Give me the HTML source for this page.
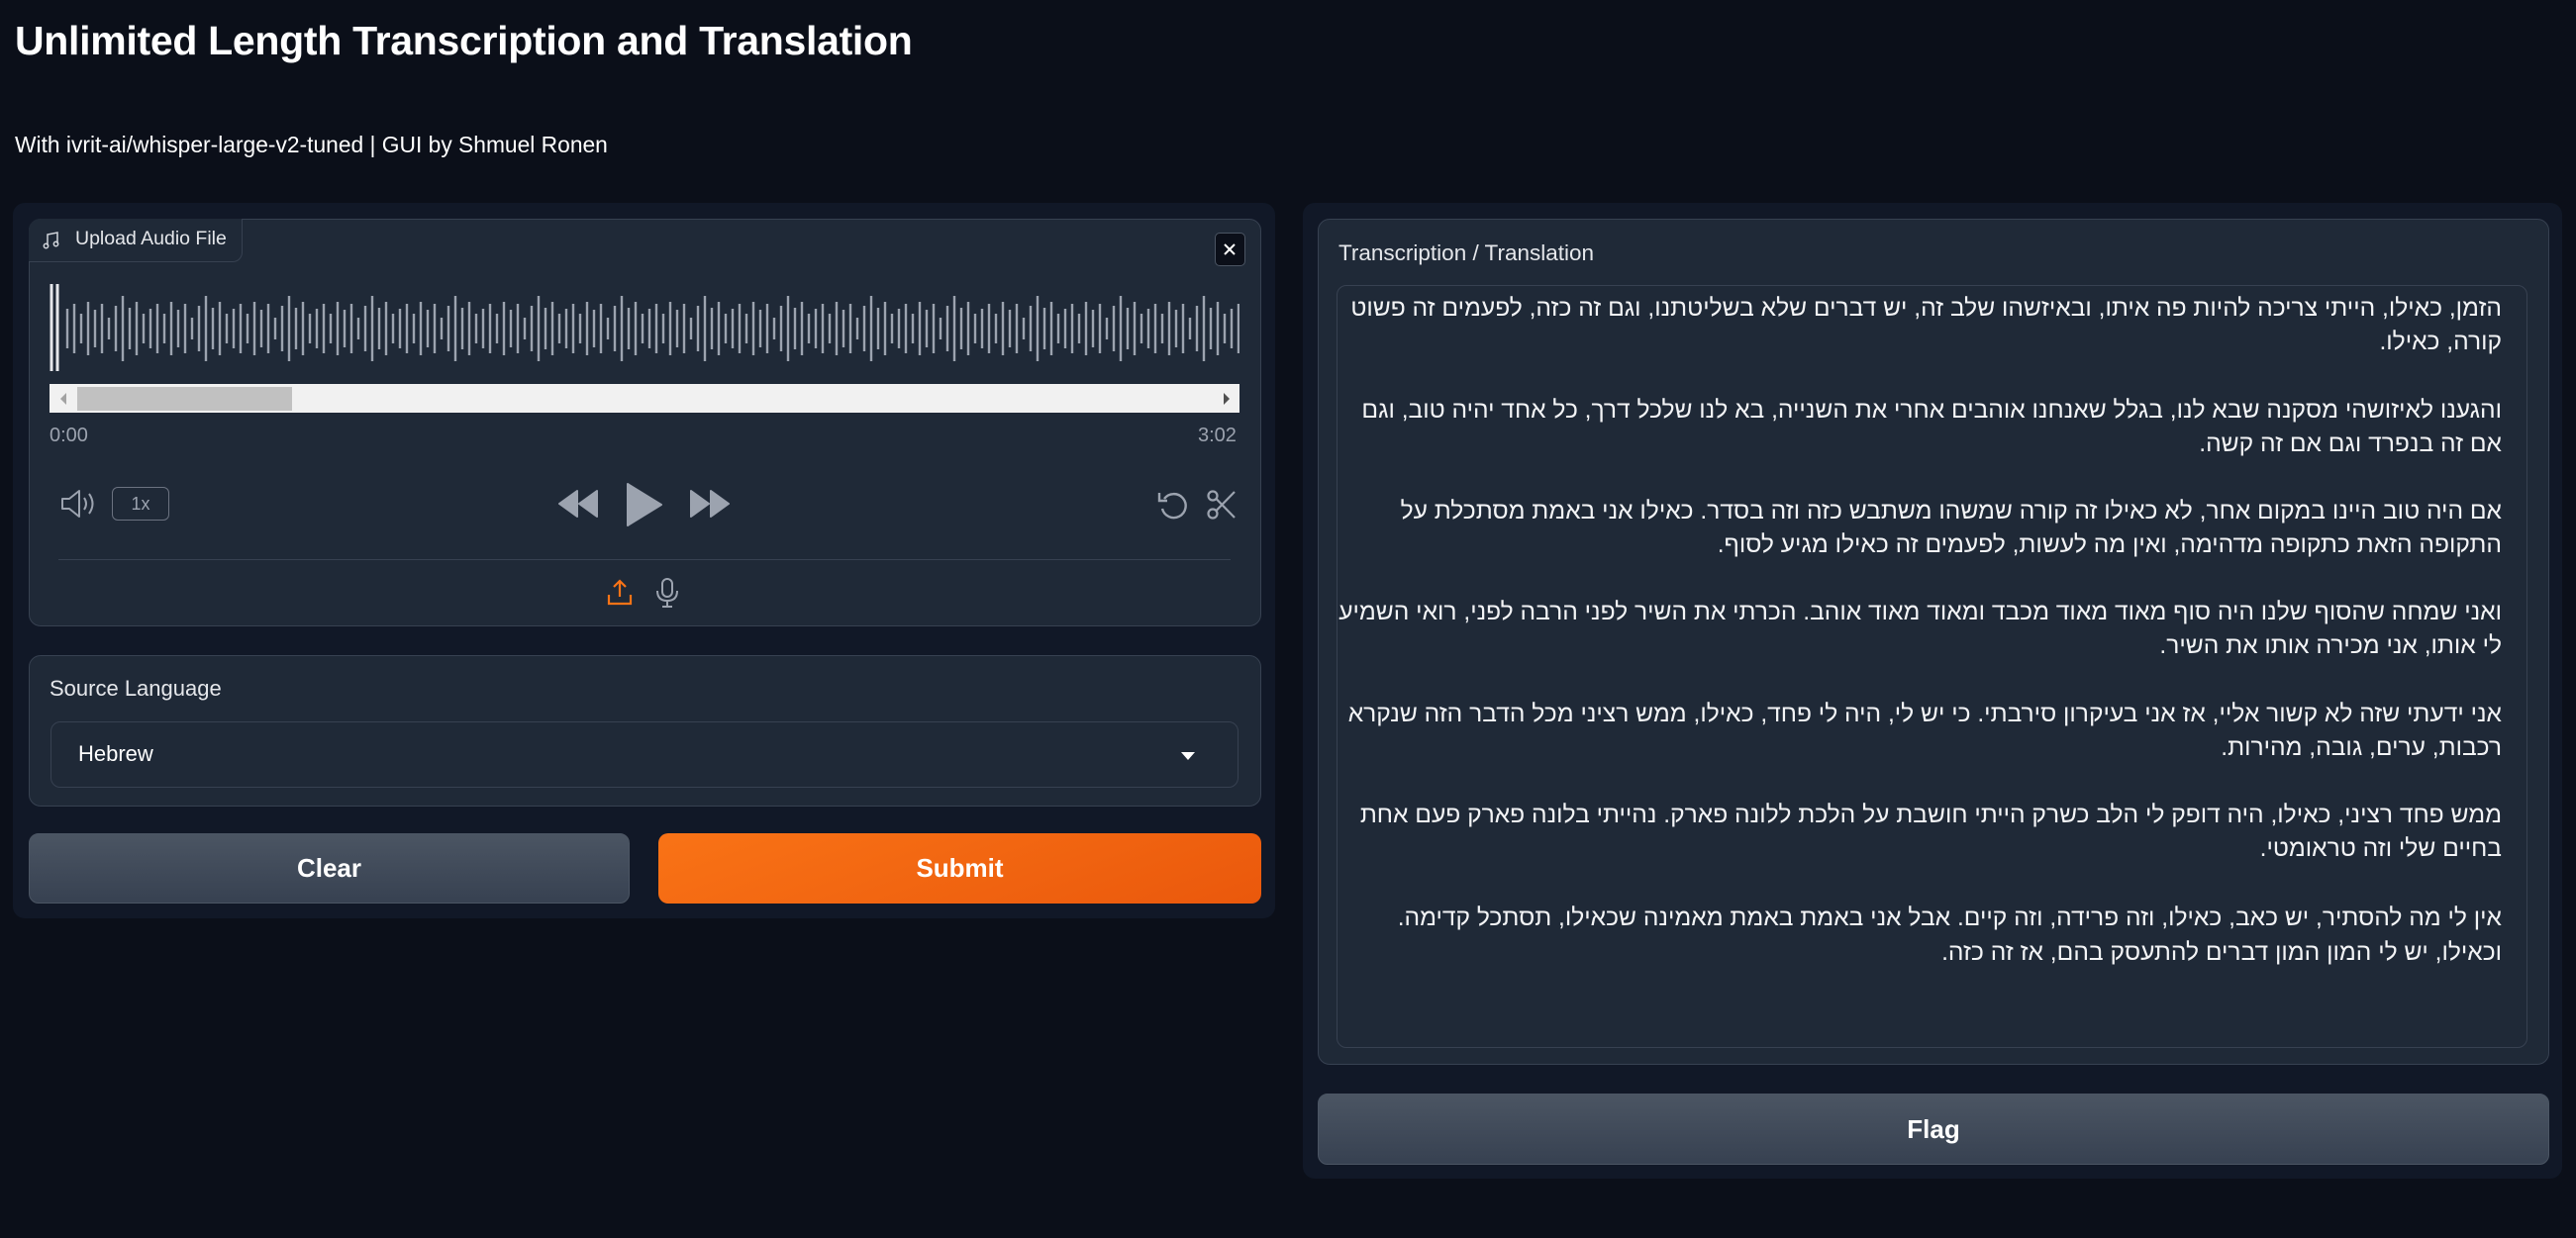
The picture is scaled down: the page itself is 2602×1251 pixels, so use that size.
<!DOCTYPE html>
<html><head><meta charset="utf-8"><style>
*{box-sizing:border-box;margin:0;padding:0}
body{width:2602px;height:1251px;background:#0b0f19;font-family:"Liberation Sans","DejaVu Sans",sans-serif;color:#fff;position:relative;overflow:hidden}
.a{position:absolute}
.panel{background:#111827;border-radius:12px}
.blk{background:#1f2937;border:1px solid #374151;border-radius:12px}
.btn{border-radius:10px;display:flex;align-items:center;justify-content:center;font-weight:bold;font-size:26px}
.gray{background:linear-gradient(180deg,#4b5563,#374151);border:1px solid #4b5563}
.hl{position:absolute;right:0;white-space:nowrap;direction:rtl;font-size:24.6px;color:#f3f4f6;line-height:34px}
</style></head><body>
<div class="a" style="left:15px;top:18px;font-size:41px;font-weight:bold;letter-spacing:-0.3px">Unlimited Length Transcription and Translation</div>
<div class="a" style="left:15px;top:133px;font-size:22.8px">With ivrit-ai/whisper-large-v2-tuned | GUI by Shmuel Ronen</div>

<div class="a panel" style="left:13px;top:205px;width:1275px;height:723px"></div>
<div class="a blk" style="left:29px;top:221px;width:1245px;height:412px"></div>
<div class="a" style="left:29px;top:221px;width:216px;height:44px;border-right:1px solid #374151;border-bottom:1px solid #374151;border-radius:12px 0 10px 0;background:#1f2937"></div>
<svg class="a" style="left:43px;top:233px" width="18" height="20" viewBox="0 0 18 20"><path d="M5 15V4l10-2v11" fill="none" stroke="#d1d5db" stroke-width="1.5"/><circle cx="3.5" cy="15.5" r="2.2" fill="none" stroke="#d1d5db" stroke-width="1.5"/><circle cx="13.5" cy="13.5" r="2.2" fill="none" stroke="#d1d5db" stroke-width="1.5"/></svg>
<div class="a" style="left:76px;top:230px;font-size:19.5px;color:#e5e7eb">Upload Audio File</div>
<div class="a" style="left:1227px;top:235px;width:31px;height:34px;background:#0b0f19;border:1px solid #4b5563;border-radius:5px"></div>
<svg class="a" style="left:1235px;top:245px" width="14" height="14"><path d="M2 2L12 12M12 2L2 12" stroke="#fff" stroke-width="2"/></svg>

<svg class="a" style="left:50px;top:287px" width="1202" height="90">
<defs><pattern id="w" x="16" y="0" width="84" height="90" patternUnits="userSpaceOnUse">
<g stroke="#9ca3af" stroke-width="2.4">
<line x1="2" y1="25" x2="2" y2="65"/><line x1="9" y1="20" x2="9" y2="70"/><line x1="16" y1="30" x2="16" y2="60"/><line x1="23" y1="18" x2="23" y2="72"/><line x1="30" y1="26" x2="30" y2="64"/><line x1="37" y1="20" x2="37" y2="70"/><line x1="44" y1="34" x2="44" y2="56"/><line x1="51" y1="22" x2="51" y2="68"/><line x1="58" y1="12" x2="58" y2="78"/><line x1="65" y1="24" x2="65" y2="66"/><line x1="72" y1="18" x2="72" y2="72"/><line x1="79" y1="30" x2="79" y2="60"/>
</g></pattern></defs>
<rect x="14" y="0" width="1188" height="90" fill="url(#w)"/>
<line x1="2" y1="0" x2="2" y2="88" stroke="#e5e7eb" stroke-width="3"/><line x1="8" y1="0" x2="8" y2="88" stroke="#e5e7eb" stroke-width="3"/>
</svg>
<div class="a" style="left:50px;top:388px;width:1202px;height:29px;background:#f1f1f1"></div>
<div class="a" style="left:78px;top:391px;width:217px;height:24px;background:#c1c1c1"></div>
<div class="a" style="left:61px;top:397px;width:0;height:0;border-top:6px solid transparent;border-bottom:6px solid transparent;border-right:6px solid #a3a3a3"></div>
<div class="a" style="left:1236px;top:397px;width:0;height:0;border-top:6px solid transparent;border-bottom:6px solid transparent;border-left:6px solid #505050"></div>
<div class="a" style="left:50px;top:429px;font-size:20px;color:#9ca3af">0:00</div>
<div class="a" style="left:1210px;top:429px;font-size:20px;color:#9ca3af">3:02</div>

<svg class="a" style="left:60px;top:492px" width="38" height="34" viewBox="0 0 38 34"><path d="M3 12h7l10-8v26l-10-8H3z" fill="none" stroke="#9ca3af" stroke-width="2" stroke-linejoin="round"/><path d="M25 11q4 6 0 12M30 7q7 10 0 20" fill="none" stroke="#9ca3af" stroke-width="2"/></svg>
<div class="a" style="left:113px;top:492px;width:58px;height:34px;border:1.5px solid #6b7280;border-radius:6px;font-size:18px;color:#9ca3af;display:flex;align-items:center;justify-content:center">1x</div>
<svg class="a" style="left:563px;top:492px" width="42" height="34"><path d="M20 4L2 17L20 30zM40 4L22 17L40 30z" fill="#9ca3af" stroke="#9ca3af" stroke-width="2" stroke-linejoin="round"/></svg>
<svg class="a" style="left:630px;top:486px" width="42" height="48"><path d="M4 3L38 24L4 45z" fill="#9ca3af" stroke="#9ca3af" stroke-width="2" stroke-linejoin="round"/></svg>
<svg class="a" style="left:696px;top:492px" width="42" height="34"><path d="M2 4L20 17L2 30zM22 4L40 17L22 30z" fill="#9ca3af" stroke="#9ca3af" stroke-width="2" stroke-linejoin="round"/></svg>
<svg class="a" style="left:1168px;top:494px" width="34" height="32" viewBox="0 0 34 32"><path d="M8 10A12 12 0 1 1 6 20" fill="none" stroke="#9ca3af" stroke-width="2.4"/><path d="M3 4v8h8" fill="none" stroke="#9ca3af" stroke-width="2.4"/></svg>
<svg class="a" style="left:1218px;top:494px" width="32" height="32" viewBox="0 0 32 32"><circle cx="7" cy="7" r="4.5" fill="none" stroke="#9ca3af" stroke-width="2.2"/><circle cx="7" cy="25" r="4.5" fill="none" stroke="#9ca3af" stroke-width="2.2"/><path d="M10.5 10L29 29M10.5 22L29 3" stroke="#9ca3af" stroke-width="2.2"/></svg>
<div class="a" style="left:59px;top:565px;width:1184px;height:1px;background:#374151"></div>
<svg class="a" style="left:613px;top:585px" width="26" height="28" viewBox="0 0 26 28"><path d="M13 2v16M7 8l6-6 6 6M2 16v9h22v-9" fill="none" stroke="#f97316" stroke-width="2.2"/></svg>
<svg class="a" style="left:661px;top:583px" width="26" height="32" viewBox="0 0 26 32"><rect x="8" y="2" width="10" height="18" rx="5" fill="none" stroke="#9ca3af" stroke-width="2"/><path d="M3 14q0 10 10 10q10 0 10-10M13 24v6M8 30h10" fill="none" stroke="#9ca3af" stroke-width="2"/></svg>

<div class="a blk" style="left:29px;top:662px;width:1245px;height:153px"></div>
<div class="a" style="left:50px;top:683px;font-size:22px;color:#e5e7eb">Source Language</div>
<div class="a" style="left:51px;top:729px;width:1200px;height:67px;border:1px solid #374151;border-radius:10px;background:#1f2937"></div>
<div class="a" style="left:79px;top:749px;font-size:22px">Hebrew</div>
<div class="a" style="left:1193px;top:760px;width:0;height:0;border-left:7px solid transparent;border-right:7px solid transparent;border-top:8px solid #fff"></div>

<div class="a btn gray" style="left:29px;top:842px;width:607px;height:71px">Clear</div>
<div class="a btn" style="left:665px;top:842px;width:609px;height:71px;background:linear-gradient(160deg,#f97316,#ea580c)">Submit</div>

<div class="a panel" style="left:1316px;top:205px;width:1272px;height:986px"></div>
<div class="a blk" style="left:1331px;top:221px;width:1244px;height:855px"></div>
<div class="a" style="left:1352px;top:243px;font-size:22.5px;color:#e5e7eb">Transcription / Translation</div>
<div class="a" style="left:1350px;top:288px;width:1203px;height:771px;border:1px solid #374151;border-radius:10px;background:#1f2937"></div>
<div class="a" style="left:1360px;top:295px;width:1167px;height:700px">
<div class="hl" style="top:0">הזמן, כאילו, הייתי צריכה להיות פה איתו, ובאיזשהו שלב זה, יש דברים שלא בשליטתנו, וגם זה כזה, לפעמים זה פשוט</div>
<div class="hl" style="top:34px">קורה, כאילו.</div>
<div class="hl" style="top:103px">והגענו לאיזושהי מסקנה שבא לנו, בגלל שאנחנו אוהבים אחרי את השנייה, בא לנו שלכל דרך, כל אחד יהיה טוב, וגם</div>
<div class="hl" style="top:137px">אם זה בנפרד וגם אם זה קשה.</div>
<div class="hl" style="top:205px">אם היה טוב היינו במקום אחר, לא כאילו זה קורה שמשהו משתבש כזה וזה בסדר. כאילו אני באמת מסתכלת על</div>
<div class="hl" style="top:239px">התקופה הזאת כתקופה מדהימה, ואין מה לעשות, לפעמים זה כאילו מגיע לסוף.</div>
<div class="hl" style="top:307px">ואני שמחה שהסוף שלנו היה סוף מאוד מאוד מכבד ומאוד מאוד אוהב. הכרתי את השיר לפני הרבה לפני, רואי השמיע</div>
<div class="hl" style="top:341px">לי אותו, אני מכירה אותו את השיר.</div>
<div class="hl" style="top:410px">אני ידעתי שזה לא קשור אליי, אז אני בעיקרון סירבתי. כי יש לי, היה לי פחד, כאילו, ממש רציני מכל הדבר הזה שנקרא</div>
<div class="hl" style="top:444px">רכבות, ערים, גובה, מהירות.</div>
<div class="hl" style="top:512px">ממש פחד רציני, כאילו, היה דופק לי הלב כשרק הייתי חושבת על הלכת ללונה פארק. נהייתי בלונה פארק פעם אחת</div>
<div class="hl" style="top:546px">בחיים שלי וזה טראומטי.</div>
<div class="hl" style="top:616px">אין לי מה להסתיר, יש כאב, כאילו, וזה פרידה, וזה קיים. אבל אני באמת באמת מאמינה שכאילו, תסתכל קדימה.</div>
<div class="hl" style="top:651px">וכאילו, יש לי המון המון דברים להתעסק בהם, אז זה כזה.</div>
</div>
<div class="a btn gray" style="left:1331px;top:1105px;width:1244px;height:72px">Flag</div>
</body></html>
